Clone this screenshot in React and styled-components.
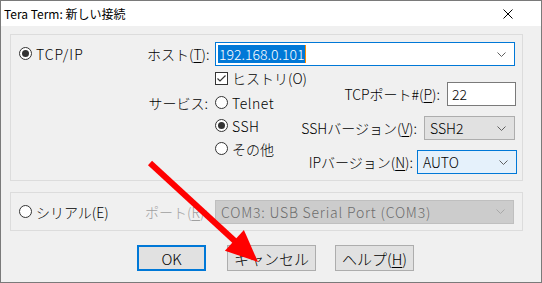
import React from "react";
import styled, { createGlobalStyle } from "styled-components";

const GlobalStyle = createGlobalStyle`
  html, body {
    margin: 0;
    padding: 0;
    background: #ffffff;
  }
  body {
    font-family: "Noto Sans CJK JP", sans-serif;
  }
`;

const Window = styled.div`
  position: relative;
  width: 542px;
  height: 283px;
  box-sizing: border-box;
  border: 1px solid #7a7a7a;
  background: #f0f0f0;
  display: flex;
  flex-direction: column;
  overflow: hidden;
  font-family: "Noto Sans CJK JP", sans-serif;
  color: #000;
`;

const TitleBar = styled.div`
  height: 25px;
  flex: none;
  background: #ffffff;
  display: flex;
  align-items: center;
  justify-content: space-between;
  padding: 0 28px 0 3px;
  font-size: 12px;
`;

const Body = styled.div`
  display: flex;
  flex-direction: column;
  padding: 8px 0 0 9px;
  font-size: 14px;
  font-weight: 300;
`;

const Group = styled.div`
  box-sizing: border-box;
  width: 513px;
  height: ${(p) => p.$h}px;
  border: 1px solid #dcdcdc;
  display: flex;
  align-items: ${(p) => (p.$center ? "center" : "flex-start")};
  padding-top: ${(p) => p.$pt || 0}px;
  margin-bottom: ${(p) => p.$mb || 0}px;
`;

const LeftCol = styled.div`
  width: ${(p) => p.$w}px;
  padding-left: 8px;
  box-sizing: border-box;
  flex: none;
`;

const RightCol = styled.div`
  flex: 1;
  min-width: 0;
  display: flex;
  flex-direction: column;
`;

const Row = styled.div`
  display: flex;
  align-items: center;
  gap: ${(p) => (p.$gap === undefined ? 7 : p.$gap)}px;
  height: ${(p) => p.$h || 24}px;
  margin-right: ${(p) => p.$mr || 0}px;
`;

const Label = styled.span`
  width: ${(p) => (p.$w ? `${p.$w}px` : "auto")};
  text-align: right;
  white-space: nowrap;
  line-height: 24px;
  flex: none;
`;

const DisabledLabel = styled.span`
  width: 70px;
  overflow: hidden;
  white-space: nowrap;
  color: #a0a0a0;
  flex: none;
`;

const Acc = styled.u`
  text-decoration: underline;
  text-underline-offset: 2px;
  text-decoration-thickness: 1px;
`;

const Item = styled.label`
  display: flex;
  align-items: center;
  gap: 4px;
  height: ${(p) => p.$h || 23}px;
  white-space: nowrap;
  letter-spacing: ${(p) => p.$ls || 0}px;
`;

const RadioDot = styled.span`
  position: relative;
  width: 13px;
  height: 13px;
  box-sizing: border-box;
  border: 1px solid #333;
  border-radius: 50%;
  background: #fff;
  flex: none;

  &::after {
    content: "";
    display: ${(p) => (p.$on ? "block" : "none")};
    position: absolute;
    left: 2px;
    top: 2px;
    width: 7px;
    height: 7px;
    border-radius: 50%;
    background: #333;
  }
`;

const CheckBox = styled.span`
  width: 13px;
  height: 13px;
  box-sizing: border-box;
  border: 1px solid #333;
  background: #fff;
  display: flex;
  align-items: center;
  justify-content: center;
  flex: none;
`;

const Combo = styled.div`
  box-sizing: border-box;
  width: ${(p) => p.$w}px;
  height: 24px;
  flex: none;
  display: flex;
  align-items: center;
  justify-content: space-between;
  padding: 0 8px 0 ${(p) => p.$pl || 5}px;
  border: 1px solid ${(p) => p.$border};
  background: ${(p) => p.$bg};
  color: ${(p) => p.$color || "#000"};
  letter-spacing: ${(p) => p.$ls || 0}px;
  white-space: nowrap;
`;

const TextBox = styled.div`
  box-sizing: border-box;
  width: ${(p) => p.$w}px;
  height: 24px;
  flex: none;
  display: flex;
  align-items: center;
  padding-left: 4px;
  border: 1px solid #7a7a7a;
  background: #fff;
`;

const Selected = styled.span`
  background: #0078d7;
  color: #fff;
  line-height: 18px;
  padding: 0 1px;
  border-right: 1px solid #ff8c00;
`;

const Lower = styled.div`
  display: flex;
`;

const ServiceCol = styled.div`
  width: 130px;
  flex: none;
  display: flex;
  flex-direction: column;
`;

const HistoryRow = styled.div`
  margin-top: 4px;
  padding-left: 68px;
`;

const ServiceRow = styled.div`
  display: flex;
  gap: 7px;
  margin-top: 5px;
`;

const RadioList = styled.div`
  display: flex;
  flex-direction: column;
`;

const OptionCol = styled.div`
  margin-left: auto;
  padding: 16px 6px 0 0;
  display: flex;
  flex-direction: column;
  align-items: flex-end;
  gap: 10px;
`;

const ButtonRow = styled.div`
  display: flex;
  gap: 20px;
  margin-top: 14px;
  padding-left: 127px;
`;

const Button = styled.button`
  box-sizing: border-box;
  width: ${(p) => p.$w}px;
  height: 26px;
  margin-left: ${(p) => p.$ml || 0}px;
  border: ${(p) => (p.$primary ? "2px solid #0078d7" : "1px solid #adadad")};
  background: #e1e1e1;
  font-family: "Noto Sans CJK JP", sans-serif;
  font-size: 15px;
  font-weight: 300;
  color: #000;
  padding: 0;
`;

const Overlay = styled.svg`
  position: absolute;
  left: -1px;
  top: -1px;
  pointer-events: none;
`;

const Chevron = ({ color = "#606060" }) => (
  <svg width="9" height="5" viewBox="0 0 9 5">
    <polyline points="0.5,0.5 4.5,4.5 8.5,0.5" fill="none" stroke={color} strokeWidth="1" />
  </svg>
);

const Radio = ({ on, children, h, ls }) => (
  <Item $h={h} $ls={ls}>
    <RadioDot $on={on} />
    <span>{children}</span>
  </Item>
);

export default function App() {
  return (
    <>
      <GlobalStyle />
      <Window>
        <TitleBar>
          <span>Tera Term: 新しい接続</span>
          <svg width="10" height="10" viewBox="0 0 10 10">
            <path d="M0.5 0.5 L9.5 9.5 M9.5 0.5 L0.5 9.5" stroke="#000" strokeWidth="1" />
          </svg>
        </TitleBar>
        <Body>
          <Group $h={147} $pt={7} $mb={11}>
            <LeftCol $w={136}>
              <Radio on h={23} ls={1}>
                TCP/IP
              </Radio>
            </LeftCol>
            <RightCol>
              <Row>
                <Label $w={61}>
                  ホスト(<Acc>T</Acc>):
                </Label>
                <Combo $w={300} $pl={2} $border="#0078d7" $bg="#fff">
                  <Selected>192.168.0.101</Selected>
                  <Chevron />
                </Combo>
              </Row>
              <Lower>
                <ServiceCol>
                  <HistoryRow>
                    <Item $h={16}>
                      <CheckBox>
                        <svg width="11" height="11" viewBox="0 0 11 11">
                          <polyline points="1.5,5.5 4,8 9.5,2.5" fill="none" stroke="#333" strokeWidth="1.2" />
                        </svg>
                      </CheckBox>
                      <span>ヒストリ(O)</span>
                    </Item>
                  </HistoryRow>
                  <ServiceRow>
                    <Label $w={61}>サービス:</Label>
                    <RadioList>
                      <Radio ls={0.5}>Telnet</Radio>
                      <Radio on ls={0.5}>
                        SSH
                      </Radio>
                      <Radio>その他</Radio>
                    </RadioList>
                  </ServiceRow>
                </ServiceCol>
                <OptionCol>
                  <Row>
                    <Label>
                      TCPポート#(<Acc>P</Acc>):
                    </Label>
                    <TextBox $w={69}>22</TextBox>
                  </Row>
                  <Row $mr={1}>
                    <Label>
                      SSHバージョン(<Acc>V</Acc>):
                    </Label>
                    <Combo $w={91} $border="#adadad" $bg="#e1e1e1">
                      <span>SSH2</span>
                      <Chevron />
                    </Combo>
                  </Row>
                  <Row $gap={4} $mr={-1}>
                    <Label>
                      IPバージョン(<Acc>N</Acc>):
                    </Label>
                    <Combo $w={100} $border="#0078d7" $bg="#e5f1fb">
                      <span>AUTO</span>
                      <Chevron />
                    </Combo>
                  </Row>
                </OptionCol>
              </Lower>
            </RightCol>
          </Group>

          <Group $h={39} $center>
            <LeftCol $w={134}>
              <Radio>シリアル(E)</Radio>
            </LeftCol>
            <DisabledLabel>
              ポート(<Acc>R</Acc>):
            </DisabledLabel>
            <Combo $w={299} $border="#bfbfbf" $bg="#cccccc" $color="#6d6d6d" $ls={0.8}>
              <span>COM3: USB Serial Port (COM3)</span>
              <Chevron color="#a8a8a8" />
            </Combo>
          </Group>

          <ButtonRow>
            <Button $w={69} $primary>
              OK
            </Button>
            <Button $w={89} $ml={1}>
              キャンセル
            </Button>
            <Button $w={79} $ml={-1}>
              ヘルプ(<Acc>H</Acc>)
            </Button>
          </ButtonRow>
        </Body>

        <Overlay width="542" height="283" viewBox="0 0 542 283">
          <line x1="150" y1="163" x2="237" y2="243" stroke="#ff0000" strokeWidth="6" />
          <polygon points="258,262 224.9,250.7 243.9,230.1" fill="#ff0000" />
        </Overlay>
      </Window>
    </>
  );
}
